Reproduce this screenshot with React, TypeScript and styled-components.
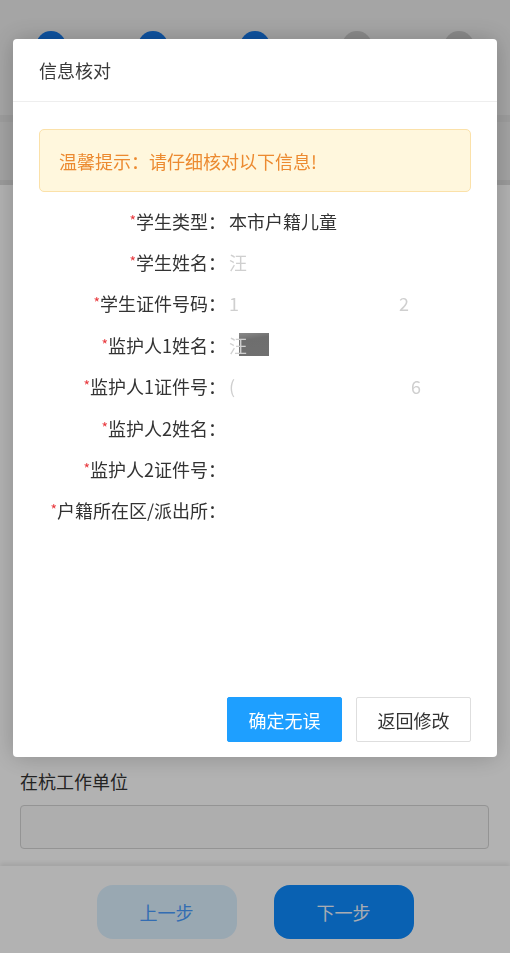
import styled, { createGlobalStyle } from "styled-components";

const GlobalStyle = createGlobalStyle`
  html, body {
    margin: 0;
    padding: 0;
    background: #ffffff;
    font-family: "Noto Sans CJK SC", "Noto Sans", sans-serif;
  }
`;

const Page = styled.div`
  display: flex;
  flex-direction: column;
  height: 953px;
  width: 510px;
  overflow: hidden;
  background: #ffffff;
`;

const StepBar = styled.div`
  display: grid;
  grid-template-columns: repeat(5, 1fr);
  height: 84px;
  padding-top: 31px;
  background: #ededed;
  border-bottom: 7px solid #e2e2e2;
`;

const Step = styled.div`
  display: flex;
  justify-content: center;
`;

const StepDot = styled.div<{ $done: boolean }>`
  width: 30px;
  height: 30px;
  border-radius: 50%;
  background: ${(p) => (p.$done ? "#1577e6" : "#c8c8c8")};
`;

const Section = styled.div`
  height: 58px;
  background: #eaeaea;
  border-bottom: 5px solid #dedede;
`;

const Form = styled.div`
  flex: 1;
  display: flex;
  flex-direction: column;
  justify-content: flex-end;
  padding: 0 21px 17px 20px;
`;

const FieldLabel = styled.div`
  font-size: 18px;
  line-height: 24px;
  color: #333;
`;

const Input = styled.div`
  margin-top: 12px;
  height: 42px;
  border: 1px solid #d4d4d4;
  border-radius: 4px;
  background: #fafafa;
`;

const BottomBar = styled.div`
  height: 87px;
  box-sizing: border-box;
  padding-top: 19px;
  display: flex;
  justify-content: center;
  gap: 37px;
  background: #ffffff;
  box-shadow: 0 -3px 4px rgba(0, 0, 0, 0.08);
`;

const NavButton = styled.button<{ $primary?: boolean }>`
  width: 140px;
  height: 54px;
  border: none;
  border-radius: 16px;
  font-family: inherit;
  font-size: 18px;
  background: ${(p) => (p.$primary ? "#0e8cff" : "#dcf1ff")};
  color: ${(p) => (p.$primary ? "#f2f7ff" : "#4a9cff")};
`;

const Overlay = styled.div`
  position: fixed;
  inset: 0;
  background: rgba(0, 0, 0, 0.3);
`;

const Modal = styled.div`
  position: fixed;
  top: 39px;
  left: 13px;
  width: 484px;
  height: 718px;
  background: #fff;
  border-radius: 4px;
  box-shadow: 0 0 24px rgba(0, 0, 0, 0.22);
  display: flex;
  flex-direction: column;
`;

const ModalHeader = styled.div`
  height: 62px;
  border-bottom: 1px solid #eeeeee;
  padding-left: 26px;
  display: flex;
  align-items: center;
  font-size: 18px;
  color: #3a3a3a;
`;

const ModalBody = styled.div`
  flex: 1;
  padding: 27px 26px 0 26px;
`;

const Notice = styled.div`
  height: 61px;
  border: 1px solid #fbe1a9;
  border-radius: 5px;
  background: #fff7dd;
  display: flex;
  align-items: center;
  padding-left: 19px;
  font-size: 18px;
  color: #ec8a30;
`;

const InfoList = styled.div`
  margin-top: 8px;
  display: flex;
  flex-direction: column;
`;

const InfoRow = styled.div`
  display: flex;
  align-items: center;
  height: 41.4px;
  font-size: 18px;
  color: #333;
`;

const Label = styled.div`
  width: 187px;
  text-align: right;
  white-space: nowrap;
`;

const Star = styled.span`
  color: #e8383d;
  font-size: 14px;
  vertical-align: 3px;
`;

const Value = styled.div`
  margin-left: 3px;
  display: flex;
  align-items: center;
`;

const Faint = styled.span<{ $gap?: number }>`
  color: #cfcfcf;
  margin-left: ${(p) => p.$gap ?? 0}px;
  filter: blur(0.6px);
`;

const Mosaic = styled.span`
  display: inline-block;
  width: 30px;
  height: 23px;
  margin-left: -8px;
  background: linear-gradient(170deg, #8a8a8a 0%, #6e6e6e 30%, #707070 100%);
`;

const ModalFooter = styled.div`
  display: flex;
  justify-content: flex-end;
  gap: 14px;
  padding: 0 26px 15px 0;
`;

const DialogButton = styled.button<{ $primary?: boolean }>`
  width: 115px;
  height: 45px;
  border-radius: 2px;
  font-family: inherit;
  font-size: 18px;
  border: 1px solid ${(p) => (p.$primary ? "#1e9fff" : "#dedede")};
  background: ${(p) => (p.$primary ? "#1e9fff" : "#fff")};
  color: ${(p) => (p.$primary ? "#fff" : "#333")};
`;

const rows: { label: string; value: React.ReactNode }[] = [
  { label: "学生类型：", value: "本市户籍儿童" },
  { label: "学生姓名：", value: <Faint>汪</Faint> },
  {
    label: "学生证件号码：",
    value: (
      <>
        <Faint>1</Faint>
        <Faint $gap={160}>2</Faint>
      </>
    ),
  },
  {
    label: "监护人1姓名：",
    value: (
      <>
        <Faint>汪</Faint>
        <Mosaic />
      </>
    ),
  },
  {
    label: "监护人1证件号：",
    value: (
      <>
        <Faint>(</Faint>
        <Faint $gap={176}>6</Faint>
      </>
    ),
  },
  { label: "监护人2姓名：", value: null },
  { label: "监护人2证件号：", value: null },
  { label: "户籍所在区/派出所：", value: null },
];

export default function App() {
  return (
    <>
      <GlobalStyle />
      <Page>
        <StepBar>
          {[0, 1, 2, 3, 4].map((i) => (
            <Step key={i}>
              <StepDot $done={i < 3} />
            </Step>
          ))}
        </StepBar>
        <Section />
        <Form>
          <FieldLabel>在杭工作单位</FieldLabel>
          <Input />
        </Form>
        <BottomBar>
          <NavButton>上一步</NavButton>
          <NavButton $primary>下一步</NavButton>
        </BottomBar>
      </Page>

      <Overlay />
      <Modal>
        <ModalHeader>信息核对</ModalHeader>
        <ModalBody>
          <Notice>温馨提示：请仔细核对以下信息!</Notice>
          <InfoList>
            {rows.map((r) => (
              <InfoRow key={r.label}>
                <Label>
                  <Star>*</Star>
                  {r.label}
                </Label>
                <Value>{r.value}</Value>
              </InfoRow>
            ))}
          </InfoList>
        </ModalBody>
        <ModalFooter>
          <DialogButton $primary>确定无误</DialogButton>
          <DialogButton>返回修改</DialogButton>
        </ModalFooter>
      </Modal>
    </>
  );
}
